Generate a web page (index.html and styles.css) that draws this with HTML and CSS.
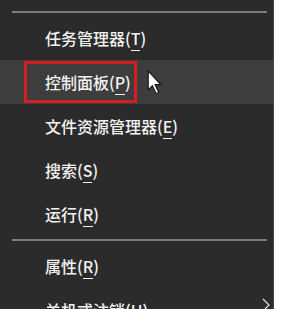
FILE: index.html
```html
<!DOCTYPE html>
<html lang="zh-CN">
<head>
  <meta charset="UTF-8">
  <meta name="viewport" content="width=device-width, initial-scale=1.0">
  <title>Win+X</title>
  <link rel="stylesheet" href="styles.css">
</head>
<body>
  <div class="menu">
    <div class="sep top"></div>
    <div class="item"><span class="label">任务管理器(<u>T</u>)</span></div>
    <div class="item hot">
      <span class="label">控制面板(<u>P</u>)</span>
      <svg class="cursor" viewBox="0 0 14 24">
        <path d="M1 1 L1 19 L5 15 L8.5 22.5 L11 21.5 L7.5 14 L13 14 Z" />
      </svg>
    </div>
    <div class="item"><span class="label">文件资源管理器(<u>E</u>)</span></div>
    <div class="item"><span class="label">搜索(<u>S</u>)</span></div>
    <div class="item"><span class="label">运行(<u>R</u>)</span></div>
    <div class="sep"></div>
    <div class="item"><span class="label">属性(<u>R</u>)</span></div>
    <div class="item">
      <span class="label">关机或注销(<u>U</u>)</span>
      <svg class="chevron" viewBox="0 0 10 14">
        <path d="M2 1 L8 7 L2 13" />
      </svg>
    </div>
  </div>
</body>
</html>
```

FILE: styles.css
```css
body {
	margin: 0;
	background: #fff;
	font-family: "Noto Sans CJK SC", "Noto Sans", sans-serif;
	overflow: hidden;
}

.menu {
	width: 273px;
	height: 309px;
	background: #2b2b2b;
	border-right: 1px solid #4a4a4a;
	overflow: hidden;
	display: flex;
	flex-direction: column;
}

.sep {
	height: 2px;
	margin: 3px 6px 3px 12px;
	background: #7c7c7c;
	flex-shrink: 0;
}

.sep.top {
	margin-top: 11px;
}

.item {
	position: relative;
	height: 44px;
	flex-shrink: 0;
	display: flex;
	align-items: center;
	padding-left: 45px;
	color: #f2f2f2;
	font-size: 16px;
	font-weight: 500;
}

.item u {
	text-decoration: none;
	border-bottom: 1px solid #f2f2f2;
}

.item.hot {
	background: #3d3d3d;
}

.item.hot .label {
	height: 36px;
	width: 89px;
	margin-left: -21px;
	padding-left: 18px;
	border: 3px solid #d21f24;
	display: flex;
	align-items: center;
}

.cursor {
	position: absolute;
	left: 147px;
	top: 10px;
	width: 15px;
	height: 25px;
	fill: #fff;
	stroke: #111;
	stroke-width: 1;
}

.chevron {
	position: absolute;
	right: 2px;
	top: 10px;
	width: 10px;
	height: 14px;
	fill: none;
	stroke: #ddd;
	stroke-width: 1.3;
}
```
